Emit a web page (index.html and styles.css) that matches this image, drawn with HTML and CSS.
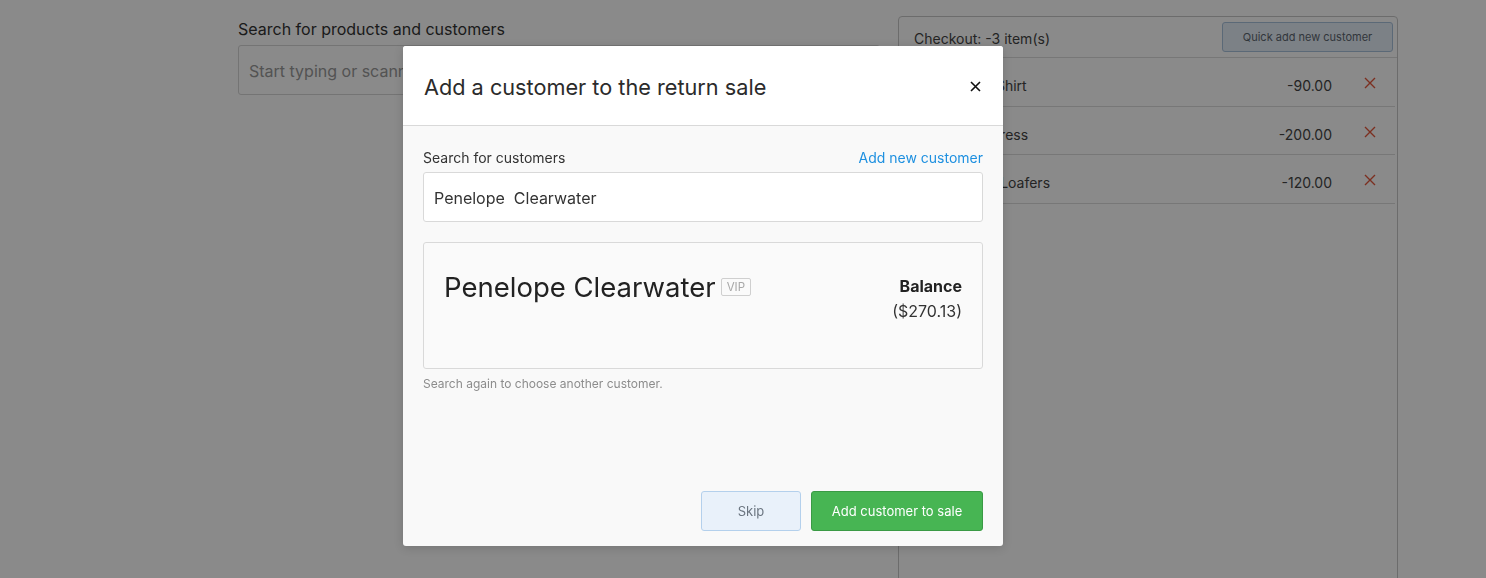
FILE: index.html
```html
<!DOCTYPE html>
<html lang="en">
<head>
<meta charset="utf-8">
<title>Return sale</title>
<link rel="stylesheet" href="styles.css">
</head>
<body>
<div class="page">
  <div class="main">
    <label class="main-label">Search for products and customers</label>
    <div class="main-input">Start typing or scanning...</div>
  </div>
  <aside class="checkout">
    <div class="checkout-head">
      <span class="checkout-title">Checkout: -3 item(s)</span>
      <button class="quick-add">Quick add new customer</button>
    </div>
    <div class="line">
      <span class="line-name">White Linen Shirt</span>
      <span class="line-amt">-90.00</span>
      <span class="line-del"><svg width="12" height="12" viewBox="0 0 12 12"><path d="M1 1L11 11M11 1L1 11" stroke="currentColor" stroke-width="1.4" fill="none"/></svg></span>
    </div>
    <div class="line">
      <span class="line-name">Floral Maxi Dress</span>
      <span class="line-amt">-200.00</span>
      <span class="line-del"><svg width="12" height="12" viewBox="0 0 12 12"><path d="M1 1L11 11M11 1L1 11" stroke="currentColor" stroke-width="1.4" fill="none"/></svg></span>
    </div>
    <div class="line">
      <span class="line-name">Black Suede Loafers</span>
      <span class="line-amt">-120.00</span>
      <span class="line-del"><svg width="12" height="12" viewBox="0 0 12 12"><path d="M1 1L11 11M11 1L1 11" stroke="currentColor" stroke-width="1.4" fill="none"/></svg></span>
    </div>
  </aside>
</div>

<div class="overlay"></div>

<div class="modal">
  <div class="modal-head">
    <h2 class="modal-title">Add a customer to the return sale</h2>
    <span class="modal-close"><svg width="11" height="11" viewBox="0 0 11 11"><path d="M1 1L10 10M10 1L1 10" stroke="currentColor" stroke-width="1.6" fill="none"/></svg></span>
  </div>
  <div class="modal-body">
    <div class="field-row">
      <span class="field-label">Search for customers</span>
      <a class="field-link">Add new customer</a>
    </div>
    <div class="search-input">Penelope&nbsp; Clearwater</div>
    <div class="card">
      <div class="card-name">
        <span class="cust-name">Penelope Clearwater</span>
        <span class="vip">VIP</span>
      </div>
      <div class="card-balance">
        <div class="bal-label">Balance</div>
        <div class="bal-value">($270.13)</div>
      </div>
    </div>
    <p class="hint">Search again to choose another customer.</p>
    <div class="actions">
      <button class="btn btn-skip">Skip</button>
      <button class="btn btn-add">Add customer to sale</button>
    </div>
  </div>
</div>
</body>
</html>
```

FILE: styles.css
```css
* { box-sizing: border-box; }
html, body { margin: 0; padding: 0; }
body {
  width: 1486px;
  height: 578px;
  overflow: hidden;
  background: #ffffff;
  font-family: Inter, Roboto, "Liberation Sans", Arial, sans-serif;
  color: #333;
}

.page {
  display: flex;
  gap: 18px;
  padding: 16px 0 0 238px;
  height: 578px;
  overflow: hidden;
}

.main {
  width: 642px;
  display: flex;
  flex-direction: column;
}
.main-label {
  font-size: 16px;
  line-height: 26px;
  padding-top: 0;
  color: #333;
}
.main-input {
  margin-top: 3px;
  height: 50px;
  border: 1px solid #d6d6d6;
  border-radius: 3px;
  padding: 1px 10px 0 10px;
  font-size: 16px;
  line-height: 48px;
  color: #999;
}

.checkout {
  width: 500px;
  border: 1px solid #c8c8c8;
  border-radius: 4px;
  background: #fff;
  height: 600px;
}
.checkout-head {
  display: flex;
  align-items: center;
  justify-content: space-between;
  height: 41px;
  padding: 0 4px 0 15px;
  border-bottom: 1px solid #ddd;
}
.checkout-title { font-size: 14px; color: #444; padding-top: 3px; }
.quick-add {
  width: 171px;
  height: 30px;
  margin-top: -1px;
  background: #e6eef7;
  border: 1px solid #a9c3dd;
  border-radius: 3px;
  font-family: inherit;
  font-size: 11px;
  color: #5c6670;
}
.line {
  display: flex;
  align-items: center;
  height: 48.5px;
  padding: 8px 0 0 15px;
  border-bottom: 1px solid #ddd;
  margin-right: 2px;
  font-size: 14px;
  color: #444;
}
.line-name { flex: 1; }
.line-amt { width: 100px; text-align: right; margin-right: 13px; }
.line-del {
  width: 50px;
  display: flex;
  justify-content: center;
  color: #e5583c;
  margin-top: -5px;
}

.overlay {
  position: fixed;
  inset: 0;
  background: rgba(0, 0, 0, 0.46);
}

.modal {
  position: absolute;
  left: 403px;
  top: 46px;
  width: 600px;
  height: 500px;
  border-radius: 3px;
  overflow: hidden;
  background: #f9f9f9;
  display: flex;
  flex-direction: column;
  box-shadow: 0 2px 10px rgba(0,0,0,0.15);
}
.modal-head {
  height: 80px;
  background: #fff;
  border-bottom: 1px solid #d9d9d9;
  display: flex;
  align-items: center;
  justify-content: space-between;
  padding: 2px 22px 0 21px;
}
.modal-title {
  margin: 0;
  font-size: 21.7px;
  font-weight: 400;
  color: #2b2b2b;
}
.modal-close {
  display: flex;
  color: #111;
}

.modal-body {
  flex: 1;
  display: flex;
  flex-direction: column;
  padding: 22px 20px 15px 20px;
}
.field-row {
  display: flex;
  justify-content: space-between;
  font-size: 14px;
  line-height: 20px;
}
.field-label { color: #333; }
.field-link { color: #1e90e0; }
.search-input {
  margin-top: 4px;
  height: 50px;
  background: #fff;
  border: 1px solid #d9d9d9;
  border-radius: 3px;
  padding: 2px 10px 0 10px;
  font-size: 16px;
  line-height: 46px;
  color: #333;
}
.card {
  margin-top: 20px;
  height: 127px;
  border: 1px solid #d9d9d9;
  border-radius: 3px;
  background: #fafafa;
  display: flex;
  justify-content: space-between;
  padding: 27px 20px 0 20px;
}
.card-name { display: flex; align-items: flex-start; gap: 5px; }
.cust-name {
  font-size: 27.5px;
  line-height: 34px;
  color: #222;
}
.vip {
  margin-top: 8px;
  border: 1px solid #cfcfcf;
  border-radius: 2px;
  font-size: 11.5px;
  color: #a8a8a8;
  padding: 2px 5px;
  line-height: 12px;
}
.card-balance { text-align: right; font-size: 16px; line-height: 25px; padding-top: 4px; }
.bal-label { font-weight: 700; color: #222; }
.bal-value { color: #333; }

.hint {
  margin: 7px 0 0 0;
  font-size: 12px;
  color: #8c8c8c;
}
.actions {
  margin-top: auto;
  display: flex;
  justify-content: flex-end;
  gap: 10px;
}
.btn {
  height: 40px;
  border-radius: 3px;
  font-family: inherit;
  font-size: 13px;
}
.btn-skip {
  width: 100px;
  background: #e9f1fa;
  border: 1px solid #b4d0ec;
  color: #6b7580;
}
.btn-add {
  width: 172px;
  background: #47b553;
  border: 1px solid #3a9a45;
  color: #fff;
}
```
